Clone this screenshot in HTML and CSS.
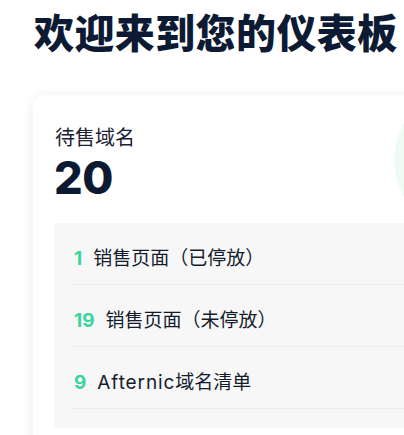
FILE: index.html
```html
<!DOCTYPE html>
<html lang="zh-CN">
<head>
<meta charset="utf-8">
<title>仪表板</title>
<link rel="stylesheet" href="styles.css">
</head>
<body>
<h1 class="title">欢迎来到您的仪表板</h1>
<section class="card">
  <div class="head">
    <div class="label">待售域名</div>
    <div class="total">20</div>
  </div>
  <ul class="list">
    <li class="row"><span class="num">1</span><span class="txt">销售页面（已停放）</span></li>
    <li class="row"><span class="num">19</span><span class="txt">销售页面（未停放）</span></li>
    <li class="row"><span class="num">9</span><span class="txt"><span class="latin">Afternic</span>域名清单</span></li>
  </ul>
</section>
</body>
</html>
```
FILE: styles.css
```css
html, body {
  margin: 0;
  padding: 0;
  background: #ffffff;
  overflow: hidden;
}
body {
  width: 404px;
  height: 435px;
  font-family: Inter, "Noto Sans CJK SC", sans-serif;
  color: #0d1a33;
}
.title {
  margin: 7px 0 0 34px;
  font-family: "Noto Sans CJK SC", sans-serif;
  font-weight: 900;
  font-size: 40px;
  line-height: 48px;
  letter-spacing: 0.4px;
  white-space: nowrap;
  color: #0d1a33;
}
.card {
  margin: 40px 0 0 33px;
  width: 560px;
  padding: 28px 21px 20px;
  box-sizing: border-box;
  border-radius: 10px;
  background:
    radial-gradient(circle at 437px 65px, #eefbf5 0, #eefbf5 75px, rgba(238,251,245,0) 76px),
    #ffffff;
  box-shadow: 0 2px 14px rgba(20, 30, 50, 0.08);
}
.head {
  display: flex;
  flex-direction: column;
}
.label {
  font-family: "Noto Sans CJK SC", sans-serif;
  font-size: 20px;
  line-height: 28px;
  color: #1a2233;
  margin-left: 1px;
}
.total {
  margin-top: 4px;
  font-family: Inter, sans-serif;
  font-weight: 800;
  font-size: 45px;
  line-height: 45px;
  letter-spacing: -0.5px;
  color: #0b1a31;
}
.list {
  list-style: none;
  margin: 23px 0 0;
  padding: 0 0 19px;
  background: #f7f7f8;
  border-radius: 4px;
}
.row {
  display: flex;
  align-items: center;
  gap: 11px;
  margin: 0 16px;
  padding: 23px 4px 12px;
  border-bottom: 1px solid #ebecee;
  font-size: 19px;
  line-height: 26px;
  white-space: nowrap;
}
.num {
  font-family: Inter, sans-serif;
  font-weight: 700;
  color: #3dd39e;
}
.txt {
  font-family: Inter, "Noto Sans CJK SC", sans-serif;
  color: #141c2c;
}
.latin {
  letter-spacing: 0.9px;
}
```
